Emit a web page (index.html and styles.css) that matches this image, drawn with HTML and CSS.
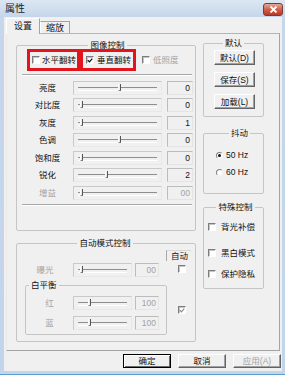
FILE: index.html
```html
<!DOCTYPE html>
<html>
<head>
<meta charset="utf-8">
<link rel="stylesheet" href="styles.css">
</head>
<body>
<div class="window">
  <div class="titlebar">
    <span class="title">属性</span>
    <div class="close"><svg width="9" height="7" viewBox="0 0 9 7"><path d="M1.5 0.5 L7.5 6.5 M7.5 0.5 L1.5 6.5" stroke="#fff" stroke-width="1.8"/></svg></div>
  </div>
  <div class="client">
    <div class="tabs">
      <div class="tab active">设置</div>
      <div class="tab">缩放</div>
    </div>
    <div class="panel">
      <div class="col-left">
        <fieldset class="group g-image">
          <legend>图像控制</legend>
          <div class="flip-row">
            <div class="mark m1"><span class="cb"></span><span class="txt">水平翻转</span></div>
            <div class="mark m2"><span class="cb"><svg width="7" height="7" viewBox="0 0 7 7"><path d="M1 3.2 L2.8 5.2 L6.2 1.2" fill="none" stroke="#000" stroke-width="1.3"/></svg></span><span class="txt">垂直翻转</span></div>
            <div class="opt disabled"><span class="cb"></span><span class="txt">低照度</span></div>
          </div>
          <div class="sep"></div>
          <div class="sliders">
            <div class="srow"><span class="lbl">亮度</span><div class="track"><span class="thumb" style="left:44px"></span></div><div class="val">0</div></div>
            <div class="srow"><span class="lbl">对比度</span><div class="track"><span class="thumb" style="left:6px"></span></div><div class="val">0</div></div>
            <div class="srow"><span class="lbl">灰度</span><div class="track"><span class="thumb" style="left:6px"></span></div><div class="val">1</div></div>
            <div class="srow"><span class="lbl">色调</span><div class="track"><span class="thumb" style="left:44px"></span></div><div class="val">0</div></div>
            <div class="srow"><span class="lbl">饱和度</span><div class="track"><span class="thumb" style="left:6px"></span></div><div class="val">0</div></div>
            <div class="srow"><span class="lbl">锐化</span><div class="track"><span class="thumb" style="left:31px"></span></div><div class="val">2</div></div>
            <div class="srow disabled"><span class="lbl">增益</span><div class="track"><span class="thumb" style="left:6px"></span></div><div class="val">00</div></div>
          </div>
          <div class="sep sep2"></div>
        </fieldset>

        <fieldset class="group g-auto">
          <legend>自动模式控制</legend>
          <div class="auto-grid">
            <div></div>
            <div class="auto-head">自动</div>

            <div class="srow small disabled exp"><span class="lbl">曝光</span><div class="track"><span class="thumb" style="left:6px"></span></div><div class="val">00</div></div>
            <div class="cbcell"><span class="cb"></span></div>

            <fieldset class="group g-wb">
              <legend>白平衡</legend>
              <div class="srow small disabled wbrow"><span class="lbl">红</span><div class="track"><span class="thumb" style="left:14px"></span></div><div class="val">100</div></div>
              <div class="srow small disabled wbrow"><span class="lbl">蓝</span><div class="track"><span class="thumb" style="left:14px"></span></div><div class="val">100</div></div>
            </fieldset>
            <div class="cbcell wbcb"><span class="cb"><svg width="7" height="7" viewBox="0 0 7 7"><path d="M1 3.2 L2.8 5.2 L6.2 1.2" fill="none" stroke="#8a8a8a" stroke-width="1.3"/></svg></span></div>
          </div>
        </fieldset>
      </div>

      <div class="col-right">
        <fieldset class="group g-default">
          <legend>默认</legend>
          <div class="btn-stack">
            <div class="btn">默认(D)</div>
            <div class="btn">保存(S)</div>
            <div class="btn">加载(L)</div>
          </div>
        </fieldset>

        <fieldset class="group g-dither">
          <legend>抖动</legend>
          <div class="radio-row"><span class="radio on"></span><span class="txt">50 Hz</span></div>
          <div class="radio-row"><span class="radio"></span><span class="txt">60 Hz</span></div>
        </fieldset>

        <fieldset class="group g-special">
          <legend>特殊控制</legend>
          <div class="chk-row r1"><span class="cb"></span><span class="txt">背光补偿</span></div>
          <div class="chk-row r2"><span class="cb"></span><span class="txt">黑白模式</span></div>
          <div class="chk-row r3"><span class="cb"></span><span class="txt">保护隐私</span></div>
        </fieldset>
      </div>
    </div>
    <div class="actions">
      <div class="btn btn-main default">确定</div>
      <div class="btn btn-main">取消</div>
      <div class="btn btn-main disabled">应用(A)</div>
    </div>
  </div>
</div>
</body>
</html>
```

FILE: styles.css
```css
* { box-sizing: border-box; }
html, body { margin: 0; padding: 0; }
body {
  width: 285px;
  height: 375px;
  overflow: hidden;
  font-family: "Liberation Sans", "Noto Sans CJK SC", sans-serif;
  font-size: 8.5px;
  color: #111;
  background: #c5d6ea;
}
.window {
  width: 285px;
  height: 375px;
  display: flex;
  flex-direction: column;
  background: linear-gradient(#dde7f3, #c6d7eb 16px, #c3d5ea);
  border-bottom: 1px solid #5b9fd0;
}
.titlebar {
  height: 17px;
  flex: none;
  display: flex;
  align-items: center;
  justify-content: space-between;
  padding: 0 2px 0 5px;
}
.title { font-size: 10px; line-height: 12px; color: #1b1b1b; }
.close {
  width: 20px;
  height: 13px;
  border: 1px solid #7b3b34;
  border-radius: 3px;
  background: linear-gradient(#e7a797, #d0604c 50%, #b83a28);
  display: flex;
  align-items: center;
  justify-content: center;
  margin-top: 1px;
}
.client {
  flex: 1;
  margin: 0 3px 3px 4px;
  background: #f0f0f0;
  display: flex;
  flex-direction: column;
}
.tabs {
  display: flex;
  align-items: flex-end;
  height: 16px;
  padding: 1px 0 0 2px;
  flex: none;
}
.tab {
  height: 12px;
  width: 30px;
  border: 1px solid #a3a3a3;
  border-bottom: none;
  display: flex;
  align-items: center;
  justify-content: center;
  line-height: 10px;
  background: #f0f0f0;
  font-size: 9px;
}
.tab.active {
  height: 16px;
  width: 34px;
  margin-bottom: -1px;
  position: relative;
  z-index: 1;
  border-color: #fff #a3a3a3 #a3a3a3 #fff;
  padding-bottom: 2px;
}
.tab + .tab { border-left-color: #fff; }
.panel {
  height: 318px;
  margin: 0 2px;
  border: 1px solid #a3a3a3;
  border-top-color: #b5b5b5;
  border-left-color: #e9e9e9;
  display: grid;
  grid-template-columns: 180px 61px;
  column-gap: 7px;
  padding-left: 9px;
  flex: none;
  align-items: start;
}
.col-left { padding-top: 6px; display: flex; flex-direction: column; }
.col-right { padding-top: 4px; display: flex; flex-direction: column; }

.group {
  margin: 0;
  padding: 0;
  border: 1px solid #c5c5c5;
  border-radius: 2px;
  min-width: 0;
}
.group > legend {
  margin: 0 auto;
  padding: 0 2px;
  line-height: 10px;
  height: 10px;
  font-size: 8.5px;
}
.g-image { width: 180px; height: 191px; padding: 0 2px 0 5px; }
.flip-row {
  display: flex;
  align-items: center;
  height: 22px;
  margin-top: -1px;
  padding-left: 5px;
}
.mark {
  height: 22px;
  border: 3px solid #e3141c;
  display: flex;
  align-items: center;
  padding-left: 2px;
  overflow: hidden;
}
.mark .cb { margin-right: 2px; }
.m1 { width: 53px; }
.m2 { width: 56px; padding-left: 3px; }
.m2 .cb { margin-right: 3px; }
.txt { line-height: 10px; white-space: nowrap; }
.cb {
  width: 8px;
  height: 8px;
  flex: none;
  border: 1px solid;
  border-color: #7c7c7c #fff #fff #7c7c7c;
  box-shadow: inset 1px 1px 0 #c4c4c4;
  background: #fff;
  margin-right: 3px;
  display: flex;
  align-items: center;
  justify-content: center;
}
.opt { display: flex; align-items: center; margin-left: 6px; }
.disabled, .disabled .txt, .disabled .lbl, .disabled .val { color: #a3a3a3; }
.sep {
  height: 2px;
  width: 170px;
  border-top: 1px solid #a8a8a8;
  border-bottom: 1px solid #fff;
  margin-top: 3px;
}
.sep2 { margin-top: 2.5px; }
.sliders { margin-top: 3px; display: flex; flex-direction: column; }
.srow {
  display: flex;
  align-items: center;
  height: 17.5px;
}
.lbl { width: 51px; text-align: center; line-height: 10px; flex: none; }
.track {
  width: 89px;
  height: 14px;
  flex: none;
  position: relative;
  border: 1px solid;
  border-color: #c9c9c9 #e8e8e8 #e8e8e8 #c9c9c9;
}
.track::before {
  content: "";
  position: absolute;
  left: 4px;
  right: 4px;
  top: 5px;
  height: 2px;
  border-top: 1px solid #8e8e8e;
  border-bottom: 1px solid #fff;
}
.thumb {
  position: absolute;
  top: 2px;
  width: 3px;
  height: 7px;
  border-left: 1px solid #fff;
  border-right: 1px solid #555;
  border-bottom: 1px solid #888;
  background: #eaeaea;
}
.val {
  width: 26px;
  height: 14px;
  flex: none;
  margin-left: 5px;
  border: 1px solid;
  border-color: #bcbcbc #e4e4e4 #e4e4e4 #bcbcbc;
  text-align: right;
  padding-right: 2px;
  line-height: 12px;
}

.g-auto { width: 180px; height: 104px; margin-top: 7px; padding: 0 2px 0 0; }
.auto-grid {
  display: grid;
  grid-template-columns: 149px 25px;
  align-items: center;
}
.auto-head {
  height: 11px;
  margin-top: 2px;
  border-left: 1px solid #a8a8a8;
  border-top: 1px solid #d8d8d8;
  line-height: 10px;
  padding-left: 4px;
}
.srow.small { height: 14px; }
.srow.small .track { width: 59px; }
.srow.small .val { width: 24px; margin-left: 3px; }
.exp { margin-top: 2px; }
.exp .lbl { width: 56px; }
.cbcell { display: flex; padding-left: 12px; }
.cbcell .cb { margin-right: 0; }
.g-wb {
  margin: 3px 0 0 8px;
  width: 142px;
  height: 55px;
  padding-top: 3px;
}
.g-wb > legend { margin: 0 0 0 3px; }
.wbrow { height: 20px !important; }
.wbrow .lbl { width: 47px; }
.wbcb { margin-top: 8px; }

.g-default { width: 61px; height: 79px; }
.btn-stack {
  display: flex;
  flex-direction: column;
  align-items: center;
  gap: 7px;
  padding-top: 2px;
  padding-left: 2px;
}
.btn {
  width: 41px;
  height: 15px;
  border: 1px solid;
  border-color: #fff #646464 #646464 #fff;
  box-shadow: inset -1px -1px 0 #a0a0a0;
  background: #f0f0f0;
  display: flex;
  align-items: center;
  justify-content: center;
  line-height: 10px;
}
.g-dither { width: 61px; height: 66px; margin-top: 11px; padding: 8.5px 0 0 12px; }
.radio-row { display: flex; align-items: center; height: 17px; }
.radio {
  width: 7px;
  height: 7px;
  border-radius: 50%;
  border: 1px solid;
  border-color: #808080 #f4f4f4 #f4f4f4 #808080;
  background: #fff;
  margin-right: 3px;
  display: flex;
  align-items: center;
  justify-content: center;
}
.radio.on::after {
  content: "";
  width: 3px;
  height: 3px;
  border-radius: 50%;
  background: #111;
}
.g-special { width: 61px; height: 87px; margin-top: 8px; padding-left: 4px; }
.chk-row { display: flex; align-items: center; height: 14px; }
.chk-row .cb { margin-right: 5px; }
.r1 { margin-top: 8px; }
.r2 { margin-top: 12px; }
.r3 { margin-top: 7px; }

.actions {
  display: flex;
  justify-content: flex-end;
  padding: 3px 1px 0 0;
  gap: 7px;
}
.btn-main { height: 14px; width: 48px; }
.btn-main.default {
  border-color: #000;
  box-shadow: inset 1px 1px 0 #fff, inset -1px -1px 0 #6a6a6a;
}
```
